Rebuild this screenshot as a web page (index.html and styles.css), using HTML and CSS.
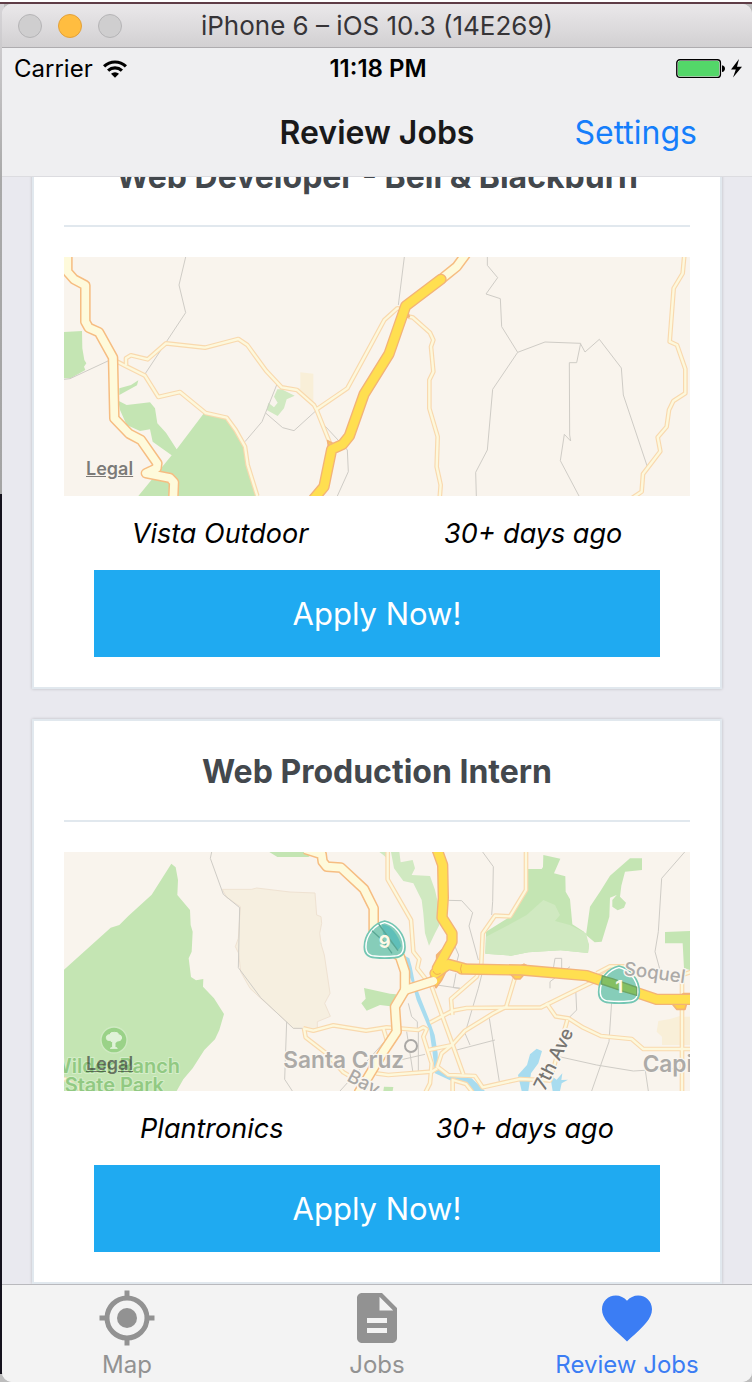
FILE: index.html
```html
<!DOCTYPE html>
<html lang="en">
<head>
<meta charset="utf-8">
<meta name="viewport" content="width=device-width, initial-scale=1">
<title>Review Jobs</title>
<link rel="stylesheet" href="styles.css">
</head>
<body>
<div class="window">
  <header class="titlebar">
    <div class="lights">
      <button class="light" type="button" aria-label="Close"></button>
      <button class="light light-min" type="button" aria-label="Minimize"></button>
      <button class="light" type="button" aria-label="Zoom"></button>
    </div>
    <div class="window-title">iPhone 6 – iOS 10.3 (14E269)</div>
  </header>

  <div class="statusbar">
    <div class="carrier">Carrier
      <svg class="wifi" viewBox="0 0 24 18" aria-hidden="true">
        <path d="M0 5.2a17.5 17.5 0 0 1 24 0l-2.2 2.3a14.2 14.2 0 0 0-19.6 0z"/>
        <path d="M4 9.4a11.8 11.8 0 0 1 16 0l-2.2 2.3a8.6 8.6 0 0 0-11.6 0z"/>
        <path d="M8 13.7a6 6 0 0 1 8 0L12 17.8z"/>
      </svg>
    </div>
    <div class="time">11:18 PM</div>
    <div class="power">
      <svg class="battery" viewBox="0 0 66 20" aria-hidden="true">
        <rect x=".8" y=".8" width="43.6" height="17.6" rx="3" fill="#fff" stroke="#000" stroke-width="1.4"/>
        <rect x="2" y="2" width="41.2" height="15.2" rx="1.6" fill="#53d769"/>
        <path d="M46 6.2c4 .4 4 6.400 0 6.800z"/>
        <path d="M63 0 55 10.500h4.800L57 18.500l9-10.800h-5z"/>
      </svg>
    </div>
  </div>

  <nav class="navbar">
    <h1 class="nav-title">Review Jobs</h1>
    <a class="nav-link" href="#settings">Settings</a>
  </nav>

  <main class="feed">
    <div class="feed-list">
      <article class="card">
        <h2 class="card-title">Web Developer - Bell &amp; Blackburn</h2>
        <div class="map">
          <svg class="map-art" viewBox="12 21 1878 717" aria-hidden="true">
            <defs>
              <g id="a-local">
                <path d="M172 335 195 347 255 377 295 441 360 426 437 489 500 503 527 540 555 590 563 645 592 738"/>
                <path d="M198 345V325L213 316 263 328 318 280 435 293 535 267 562 285 618 362 665 412 711 420 762 465 770 480 810 580"/>
                <path d="M770 478 862 415 930 290 973 210 1012 175 1035 180"/>
                <path d="M1045 200 1058 202 1110 248 1120 270 1113 290 1120 365 1108 390V475L1133 560 1130 650 1142 705 1139 745"/>
                <path d="M1873 15 1868 70 1841 115 1829 275 1851 285 1876 357V430L1840 453 1827 480 1820 530 1793 562 1801 604 1749 672 1745 725 1715 745"/>
              </g>
              <g id="a-main">
                <path d="M22 10V65L42 88 76 106V215L86 233 117 247 159 323 163 505 207 551 243 570 292 640 290 655 258 670 330 684 342 697 340 745"/>
                <path d="M1143 88 1190 50 1218 12"/>
              </g>
              <path id="a-hwy" d="M760 748 792 710 815 598 848 583 868 558 912 433 987 312 1037 168 1143 88"/>
            </defs>
            <path class="land" d="M0 0h1900v750H0z"/>
            <path class="park" d="M12 246 66 243 67 295 73 330 79 340 72 350 76 360 32 385H12zM178 415 213 405 235 391 231 406 178 435zM175 452 200 465 270 457 285 475 292 520 318 548 350 598 435 485 500 503 527 540 555 590 563 645 596 738H235L335 616 278 575 270 538 240 543 200 525 180 480z"/>
            <path class="park-light" d="M652 418 665 418 704 437 680 448 672 475 653 498 620 480 625 458 642 472 653 458 642 440z"/>
            <path class="sand-block" d="M721 367 760 371V460L711 420 721 415z"/>
            <path class="track" d="M377 21 357 105 377 188 318 277 255 372M12 388 30 386 148 331M650 405 606 515 555 575M618 490 668 533 702 542 768 482M795 528 862 600 865 665 832 738M1033 21 1015 165M1282 21V46L1313 83 1278 132 1321 146 1325 230 1373 307 1298 418 1282 600 1247 667 1249 738M1373 307 1455 276 1562 280 1550 338H1528L1529 555 1532 573 1513 553 1501 632 1557 738M1562 282 1575 306 1618 268 1684 354 1690 435 1762 650"/>
            <use class="local-edge" href="#a-local"/><use class="local-fill" href="#a-local"/>
            <use class="main-edge" href="#a-main"/><use class="main-fill" href="#a-main"/>
            <path class="ramp" d="M803 572 822 582 808 610zM1036 165 1048 200 1030 205z"/>
            <use class="hwy-edge" href="#a-hwy"/><use class="hwy-fill" href="#a-hwy"/>
          </svg>
          <a class="legal" href="#legal">Legal</a>
        </div>
        <div class="meta"><span>Vista Outdoor</span><span>30+ days ago</span></div>
        <button class="apply" type="button">Apply Now!</button>
      </article>

      <article class="card">
        <h2 class="card-title">Web Production Intern</h2>
        <div class="map">
          <svg class="map-art" viewBox="12 21 1878 717" role="img" aria-label="Map of Santa Cruz">
            <defs>
              <g id="b-local">
                <path d="M730 550 760 557 820 541 918 557 980 547 1075 555 1090 547 1100 553 1090 575 1115 655 1110 715 1095 745"/>
                <path d="M732 550 737 577 800 626 850 682 900 712"/>
                <path d="M983 15V103L1053 225 1060 320 1078 343 1072 370 1115 425 1210 688"/>
                <path d="M1398 10V135L1350 214 1305 212 1268 265 1264 355 1250 395 1173 462 1177 510"/>
                <path d="M1365 397 1338 487M1110 533 1178 497 1220 489 1443 487 1600 410 1650 378"/>
                <path d="M1335 487 1300 505 1215 557 1178 598 1145 625 1132 665 1165 690 1245 693 1268 727 1380 702 1470 706 1522 525M1178 600 1105 615"/>
                <path d="M1459 474 1487 514 1525 520 1570 548 1623 573 1715 582 1750 612H1895M1866 400V745M1866 390 1895 380"/>
                <path d="M948 685 985 690 1115 680 1132 670M970 550 985 600M1178 745V705L1218 717 1240 745M12 700 80 745"/>
                <path d="M1610 385 1650 364H1700"/>
              </g>
              <g id="b-main">
                <path d="M735 12 785 28 788 50 800 65 843 68 912 132 941 190V270L1000 320 1020 335 1035 380V435L1005 485 1010 560 970 620 895 745"/>
                <path stroke-linecap="round" d="M1035 435 1120 408"/>
              </g>
              <g id="b-hwy">
                <path d="M1125 385 1165 358 1210 370"/>
                <path d="M1205 372 1385 375 1580 392 1790 463H1900"/>
                <path d="M1130 10 1148 60 1150 158 1146 218 1176 265V290L1132 370"/>
              </g>
            </defs>
            <path class="land" d="M0 0h1900v750H0z"/>
            <path class="park" d="M12 374 152 248 178 240 205 213 275 149 334 56 347 67 354 105 352 150 390 195 392 240 398 260 395 320 386 340 393 396 408 406 430 402 429 425 462 460 492 507 478 555 465 583 433 615 398 670 370 703 350 738H12zM628 21H770L745 36H652zM912 429 990 446 1008 448 1003 485 960 480 920 497 904 475 917 461z"/>
            <path class="park" d="M1400 72 1445 72 1449 66 1450 30 1501 41 1482 85 1516 94 1517 140 1530 163 1537 238 1572 260 1587 300 1584 324 1502 316 1405 322 1353 332 1277 326 1278 260 1355 212 1398 135zM1578 270 1590 185 1622 137 1650 92 1710 40H1746V75L1695 80 1684 122 1680 155 1698 173 1692 188 1673 196 1657 185V165L1670 150 1650 158 1648 215 1625 290 1604 292zM1815 261 1890 258V375L1872 370 1868 295H1815zM972 725 1000 726 998 738H970z"/>
            <path class="park-light" d="M958 21 970 30 983 42V21zM993 21H1018L1022 52 1058 45 1065 70 1055 90 1110 93 1125 135 1133 170 1138 240 1125 265 1107 302 1095 265 1090 205 1085 165 1060 115 1030 108 1002 70zM1278 275 1355 235 1400 210 1450 165 1485 180 1500 210 1485 228 1530 240 1578 265 1587 300 1584 324 1502 316 1405 322 1353 332 1275 326z"/>
            <path class="sand" d="M487 133 575 133 590 129 690 141 765 144 770 210 783 215 785 235 779 265 784 300 793 330 810 445 802 460 794 475 811 514 772 530V552L700 550 680 530 600 458 570 430 542 380 536 325 526 305 535 280 541 185 500 157z"/>
            <path class="sand-block" d="M1795 528 1830 522 1860 513V600H1806V575L1790 560zM1872 515H1890V600H1872z"/>
            <path class="water" d="M1030 330 1048 340 1055 365 1065 415 1084 465 1108 525 1124 570 1133 625 1134 660 1145 682 1170 696 1235 700 1275 738H1240L1220 712 1175 708 1125 685 1118 625 1108 555 1070 465 1055 410 1040 370zM1430 611 1446 618 1435 655 1413 685 1405 738H1385L1374 690 1401 660 1410 628zM1470 690 1490 704 1507 685 1504 705 1524 704 1505 715 1500 738H1478z"/>
            <path class="track" d="M455 21 451 40 490 148 539 188 535 368 602 458 700 550H728M680 530 674 703 697 738M840 738 960 605 1000 560M1268 21 1300 65 1298 170 1295 210M1165 166 1205 167 1238 203 1227 243 1255 345M1183 300 1196 330 1190 352M1874 21 1805 100 1795 260 1785 320 1800 375M1480 370 1485 340H1505V370M1130 420 1200 430 1180 428 1188 385M1270 370 1255 430 1215 565 1230 600M1288 520 1318 710M1190 615 1305 585M1475 630 1610 660 1720 678 1890 668M1655 470 1647 590 1617 675 1595 738M1547 430 1550 495 1520 525M1470 430V410L1530 365M1755 670 1765 738M1045 475 1055 515 1072 530V550M1040 560 1060 690M1075 560V685M1020 645 1095 628"/>
            <use class="local-edge" href="#b-local"/><use class="local-fill" href="#b-local"/>
            <use class="main-edge" href="#b-main"/>
            <path class="ramp" d="M1130 330 1145 315 1158 330 1140 360 1130 350zM1350 385 1365 402 1380 402 1395 385zM1375 367 1392 358 1410 367zM1590 400 1610 412 1640 405zM1835 475 1850 493H1875L1880 475zM1860 452 1870 446H1895V455zM1125 375 1112 395 1128 428 1145 405 1160 375z"/>
            <use class="hwy-edge" href="#b-hwy"/><use class="hwy-fill" href="#b-hwy"/>
            <use class="main-fill" href="#b-main"/>
            <path class="hwy-join" d="M1119 378Q1126 394 1142 385M1205 358Q1198 372 1205 385"/>
            <g transform="translate(974 285)">
              <path class="shield-edge" d="M0-57C-32-50-61-18-61 21-61 44-48 52-30 53Q0 56 30 53C48 52 61 44 61 21 61-18 32-50 0-57z"/>
              <path class="shield-fill" d="M0-50C-28-43-54-15-54 20-54 38-45 45-30 46Q0 49 30 46C45 45 54 38 54 20 54-15 28-43 0-50z"/>
              <path class="shield-water" d="M-8-47C20-45 40-15 50 18L40 30 20 10-5-20z"/>
              <path class="shield-road" d="M-38-28-5 2 22 40M-18-48 8-12 40 32"/>
              <text class="shield-number" x="0" y="24">9</text>
            </g>
            <g transform="translate(1677 420)">
              <path class="shield-edge" d="M0-57C-32-50-61-18-61 21-61 44-48 52-30 53Q0 56 30 53C48 52 61 44 61 21 61-18 32-50 0-57z"/>
              <path class="shield-fill" d="M0-50C-28-43-54-15-54 20-54 38-45 45-30 46Q0 49 30 46C45 45 54 38 54 20 54-15 28-43 0-50z"/>
              <path class="shield-hwy" d="M-50-27-20-19 53 7V31L15 20-53-3z"/>
              <text class="shield-number" x="0" y="24">1</text>
            </g>
            <circle class="park-pin" cx="162" cy="585" r="39"/>
            <path class="park-tree" d="M158 608V592L150 586Q138 588 139 576 141 568 149 569 151 561 163 562 175 561 176 569 185 570 185 579 183 589 173 588L165 593V608Q170 607 172 610H151Q154 607 158 608z"/>
            <circle class="city-dot" cx="1053" cy="603" r="18"/>
            <text class="park-label" x="-26" y="684">Wilder Ranch</text>
            <text class="park-label" x="14" y="742">State Park</text>
            <text class="city-label" x="670" y="668">Santa Cruz</text>
            <text class="city-label" x="1748" y="680">Capitola</text>
            <text class="town-label" transform="translate(1690 389) rotate(8)">Soquel</text>
            <text class="street-label faint" transform="translate(858 706) rotate(28)">Bay</text>
            <text class="street-label" transform="translate(1454 740) rotate(-64)">7th Ave</text>
          </svg>
          <a class="legal" href="#legal">Legal</a>
        </div>
        <div class="meta"><span>Plantronics</span><span>30+ days ago</span></div>
        <button class="apply" type="button">Apply Now!</button>
      </article>
    </div>
  </main>

  <nav class="tabbar">
    <a class="tab" href="#map">
      <svg class="tab-icon" viewBox="0 0 24 24" aria-hidden="true"><path d="M12 1v3M12 20v3M1 12h3M20 12h3" fill="none" stroke="currentColor" stroke-width="2"/><circle cx="12" cy="12" r="8" fill="none" stroke="currentColor" stroke-width="2"/><circle cx="12" cy="12" r="4"/></svg>
      Map
    </a>
    <a class="tab" href="#jobs">
      <svg class="tab-icon" viewBox="0 0 24 24" aria-hidden="true"><path d="M14 2H6c-1.100 0-2 .9-2 2v16c0 1.100.9 2 2 2h12c1.100 0 2-.9 2-2V8l-6-6zm2 16H8v-2h8v2zm0-4H8v-2h8v2zm-3-5V3.500L18.500 9H13z"/></svg>
      Jobs
    </a>
    <a class="tab tab-active" href="#review" aria-current="page">
      <svg class="tab-icon" viewBox="0 0 24 24" aria-hidden="true"><path d="M12 21.350l-1.450-1.320C5.400 15.360 2 12.280 2 8.500 2 5.420 4.420 3 7.500 3c1.740 0 3.410.81 4.500 2.090C13.090 3.810 14.760 3 16.500 3 19.580 3 22 5.420 22 8.500c0 3.780-3.400 6.860-8.550 11.540L12 21.350z"/></svg>
      Review Jobs
    </a>
  </nav>
</div>
</body>
</html>
```
FILE: styles.css
```css
* { box-sizing: border-box; }

body {
  margin: 0;
  min-height: 100vh;
  padding: 4px 0 0 2px;
  font-family: Inter, "Liberation Sans", sans-serif;
  background:
    linear-gradient(#fff 2px, #5f3d47 2px, #5f3d47 4px, transparent 4px) 0 0 / 100% 4px no-repeat,
    linear-gradient(#d8d6d9, #a9a9a9 180px, #a4a4a4 494px, #14121d 494px, #14121d 1374px, #bdbdbd 1374px) 0 0 / 4px 100% no-repeat,
    #bdbdbd;
}

.window {
  display: flex;
  flex-direction: column;
  height: calc(100vh - 4px);
  overflow: hidden;
  border-radius: 10px;
  background: #efeff1;
}

.titlebar {
  display: grid;
  grid-template-columns: 1fr auto 1fr;
  align-items: center;
  height: 44px;
  flex: none;
  padding: 0 16px;
  border-bottom: 1px solid #aeacaf;
  background: linear-gradient(#eae8ea, #d2d0d2);
}

.lights { display: flex; gap: 16px; }

.light {
  width: 24px;
  height: 24px;
  padding: 0;
  border: 1px solid #b5b4b6;
  border-radius: 50%;
  background: #cfcecf;
}

.light-min { border-color: #e2a03a; background: #ffbd40; }

.window-title { font-size: 26px; line-height: 32px; color: #363437; }

.statusbar {
  display: grid;
  grid-template-columns: 1fr auto 1fr;
  align-items: center;
  height: 41px;
  flex: none;
  padding: 0 10px 0 12px;
  font-size: 24px;
  color: #000;
}

.carrier { display: flex; align-items: center; gap: 10px; }
.wifi { width: 24px; height: 18px; }
.time { font-weight: 600; }
.power { display: flex; justify-content: flex-end; }
.battery { width: 66px; height: 20px; }

.navbar {
  display: grid;
  grid-template-columns: 1fr auto 1fr;
  align-items: center;
  height: 88px;
  flex: none;
  padding: 0 55px;
  border-bottom: 1px solid #dcdce0;
}

.nav-title { grid-column: 2; margin: 0; font-size: 32px; font-weight: 600; color: #19191a; }
.nav-link { justify-self: end; font-size: 32px; color: #157efb; text-decoration: none; }

.feed {
  flex: 1;
  min-height: 0;
  overflow: hidden;
  background: #e9e9ef;
}

/* The list is scrolled so that the first card sits partly under the bar. */
.feed-list {
  display: flex;
  flex-direction: column;
  gap: 30px;
  margin: -53px 30px 0;
}

.card {
  padding: 30px;
  border: 2px solid #e1e8ee;
  background: #fff;
  box-shadow: 0 0 3px rgba(0, 0, 0, .2);
}

.card-title {
  margin: 0 0 30px;
  padding-bottom: 27px;
  border-bottom: 2px solid #e1e8ee;
  font-size: 32px;
  font-weight: 700;
  line-height: 42px;
  text-align: center;
  color: #43484d;
}

.map { position: relative; }
.map-art { display: block; width: 100%; }

.legal {
  position: absolute;
  left: 22px;
  bottom: 16px;
  font-size: 18px;
  font-weight: 600;
  line-height: 22px;
  color: rgba(40, 40, 40, .6);
}

.meta {
  display: flex;
  justify-content: space-around;
  align-items: center;
  height: 74px;
  font-size: 27px;
  font-style: italic;
  color: #000;
}

.apply {
  display: block;
  width: calc(100% - 60px);
  height: 87px;
  margin: 0 30px;
  padding: 0;
  border: 0;
  background: #1faaf1;
  font: 400 31px Inter, "Liberation Sans", sans-serif;
  color: #fff;
}

.tabbar {
  display: grid;
  grid-template-columns: repeat(3, 1fr);
  height: 98px;
  flex: none;
  padding-top: 3px;
  border-top: 1px solid #b9b9bd;
  background: #f3f3f3;
}

.tab {
  display: flex;
  flex-direction: column;
  align-items: center;
  font-size: 24px;
  line-height: 34px;
  color: #929292;
  text-decoration: none;
}

.tab-active { color: #3b7df4; }
.tab-icon { width: 60px; height: 60px; fill: currentColor; }

/* Map drawing */
.land { fill: #f9f4ed; }
.park { fill: #c4e5b3; }
.park-light { fill: #d0e9c1; }
.sand { fill: #f6efe0; stroke: #efe2d2; stroke-width: 3; }
.sand-block { fill: #f9efd8; }
.water { fill: #a8dcef; }
.track { fill: none; stroke: #cfccc6; stroke-width: 3; }
.local-edge, .local-fill, .main-edge, .main-fill, .hwy-edge, .hwy-fill {
  fill: none;
  stroke-linejoin: round;
}
.local-edge { stroke: #f9d9ae; stroke-width: 14; }
.local-fill { stroke: #fdf8dc; stroke-width: 7; }
.main-edge { stroke: #f6bd82; stroke-width: 32; }
.main-fill { stroke: #fefadb; stroke-width: 23; }
.hwy-edge { stroke: #f3b377; stroke-width: 34; stroke-linecap: round; }
.hwy-fill { stroke: #ffdf50; stroke-width: 26; stroke-linecap: round; }
.hwy-join { fill: none; stroke: #f3b04f; stroke-width: 3; }
.ramp { fill: #ffd04a; stroke: #f3b377; stroke-width: 5; stroke-linejoin: round; }
.shield-edge { fill: #fff; stroke: #74c6b3; stroke-width: 5; }
.shield-fill { fill: #86cdb9; }
.shield-water { fill: #5fbfb9; }
.shield-road { fill: none; stroke: #5aa795; stroke-width: 4; }
.shield-hwy { fill: #84bf63; stroke: #6da464; stroke-width: 4; }
.shield-number { font-size: 54px; font-weight: 700; text-anchor: middle; fill: #fdf9e7; }
.park-pin { fill: #9ad288; stroke: #d0eac3; stroke-width: 4; }
.park-tree { fill: #e0f2d8; stroke: #e0f2d8; stroke-width: 3; }
.city-dot { fill: #f9f4ed; stroke: #aaa8a5; stroke-width: 6; }
.park-label, .city-label, .town-label, .street-label { paint-order: stroke; stroke-linejoin: round; }
.park-label { font-size: 60px; font-weight: 600; fill: #91c982; stroke: #d5edc9; stroke-width: 6; }
.city-label { font-size: 68px; font-weight: 600; fill: #acaaa7; stroke: #faf6f0; stroke-width: 8; }
.town-label { font-size: 56px; font-weight: 500; fill: #acaaa7; stroke: #faf6f0; stroke-width: 8; }
.street-label { font-size: 56px; font-weight: 500; fill: #777572; stroke: #faf6f0; stroke-width: 10; }
.street-label.faint { fill: #aaa8a5; }
```
